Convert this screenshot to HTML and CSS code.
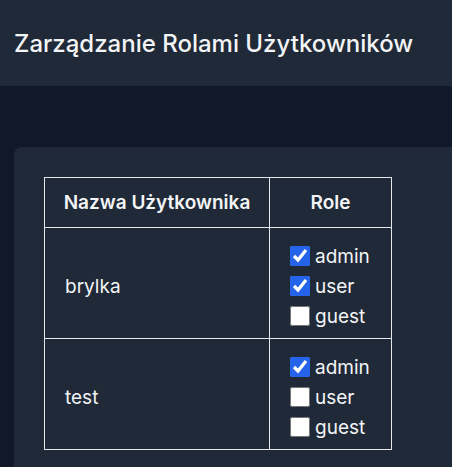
FILE: index.html
```html
<!DOCTYPE html>
<html lang="pl">
<head>
    <meta charset="UTF-8">
    <meta name="viewport" content="width=device-width, initial-scale=1.0">
    <title>Zarządzanie Rolami Użytkowników</title>
    <link rel="stylesheet" href="styles.css">
</head>
<body>

    <header class="topbar">
        <h1>Zarządzanie Rolami Użytkowników</h1>
    </header>

    <main class="content">
        <div class="card">
            <table class="roles-table">
                <thead>
                    <tr>
                        <th class="col-user">Nazwa Użytkownika</th>
                        <th class="col-roles">Role</th>
                    </tr>
                </thead>
                <tbody>
                    <tr>
                        <td class="user-name">brylka</td>
                        <td>
                            <label class="role"><input type="checkbox" checked> admin</label>
                            <label class="role"><input type="checkbox" checked> user</label>
                            <label class="role"><input type="checkbox"> guest</label>
                        </td>
                    </tr>
                    <tr>
                        <td class="user-name">test</td>
                        <td>
                            <label class="role"><input type="checkbox" checked> admin</label>
                            <label class="role"><input type="checkbox"> user</label>
                            <label class="role"><input type="checkbox"> guest</label>
                        </td>
                    </tr>
                </tbody>
            </table>
        </div>
    </main>

</body>
</html>
```

FILE: styles.css
```css
body {
    margin: 0;
    font-family: 'Inter', 'Noto Sans', sans-serif;
    background: #111827;
    color: #f3f4f6;
    overflow: hidden;
}
.topbar {
    height: 86px;
    display: flex;
    align-items: center;
    padding: 0 14px;
    background: #1f2937;
}
.topbar h1 {
    margin: 0;
    font-size: 24px;
    font-weight: 500;
}
.content {
    padding: 61px 0 0 14px;
}
.card {
    margin-right: -20px;
    padding: 30px;
    background: #1f2937;
    border-radius: 8px;
}
.roles-table {
    border-collapse: collapse;
}
.roles-table th,
.roles-table td {
    border: 1px solid #e5e7eb;
}
.roles-table th {
    height: 50px;
    padding: 0 16px;
    font-size: 19px;
    font-weight: 600;
    box-sizing: border-box;
}
.col-user {
    width: 225px;
    box-sizing: border-box;
}
.col-roles {
    width: 122px;
}
.roles-table td {
    padding: 13px 20px 7px;
    font-size: 19px;
}
.user-name {
    vertical-align: middle;
}
.role {
    display: flex;
    align-items: center;
    gap: 5px;
    height: 30px;
    font-size: 19px;
}
.role input {
    width: 20px;
    height: 20px;
    margin: 0;
    accent-color: #2563eb;
}
```
